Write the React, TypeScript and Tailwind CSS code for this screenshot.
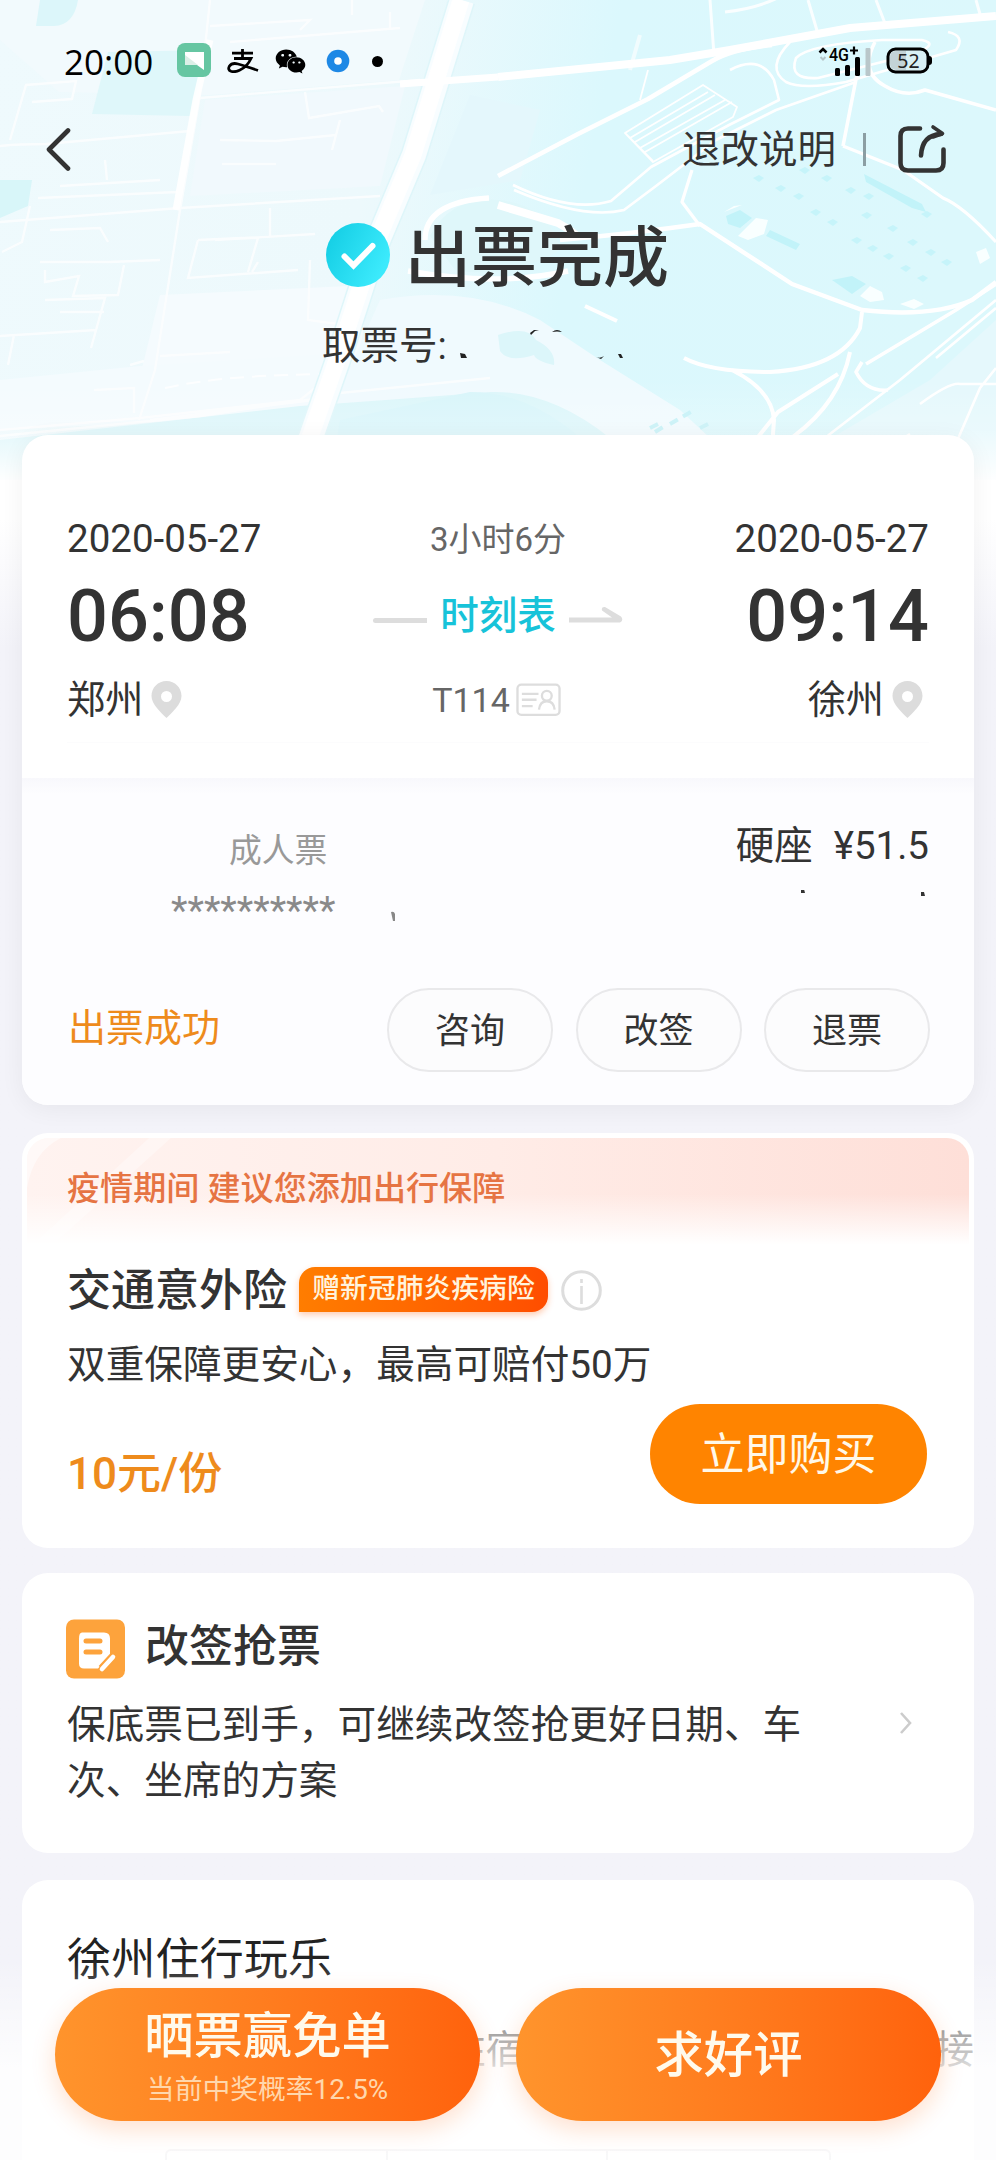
import type { ReactNode } from 'react';
import { FaWeixin } from 'react-icons/fa';

function MapBackdrop() {
  return (
    <svg className="absolute left-0 top-0" width="996" height="480" viewBox="0 0 996 480" fill="none">
      <defs>
        <linearGradient id="land" x1="0" y1="0" x2="1" y2="0.1">
          <stop offset="0" stopColor="#effafd" />
          <stop offset="0.4" stopColor="#edf9fc" />
          <stop offset="0.62" stopColor="#dbf8fd" />
          <stop offset="1" stopColor="#dcf8fc" />
        </linearGradient>
        <linearGradient id="fade" x1="0" y1="0" x2="0" y2="1">
          <stop offset="0" stopColor="#fff" stopOpacity="0" />
          <stop offset="0.5" stopColor="#fff" stopOpacity="0.2" />
          <stop offset="1" stopColor="#fff" stopOpacity="0.95" />
        </linearGradient>
      </defs>
      <rect width="996" height="480" fill="url(#land)" />
      {/* blocks */}
      <path d="M0 0h425l-26 80-190 15-150-3L0 40z" fill="#f2fafd" />
      <path d="M40 0h38q-4 25-24 26H36z" fill="#dcf6fa" />
      <path d="M108 52l100-2-18 66-98-2z" fill="#dff7fa" />
      <path d="M0 180h32l-4 26-28 12z" fill="#d8f6f9" />
      <path d="M205 100l200-14-25 100-190 10z" fill="#f1f9fd" />
      <path d="M470 95l70 15-20 70-90 15z" fill="#e4f7fc" />
      <path d="M160 295l210-10-12 80-220 20z" fill="#f5fbfe" />
      <path d="M0 380l140-14 190-12-10 60L0 430z" fill="#f4fbfe" />
      <path d="M380 300q90-16 160 20l60 40 80 50 75 70H300z" fill="#f0fafe" />
      <path d="M0 440l300-34q90-6 190-14 60-2 120 46l20 42H0z" fill="#dcf6fa" />
      <path d="M340 420l130-28q80 0 150 88H330z" fill="#d8f5fa" />
      <path d="M760 480L930 380l66-60v160z" fill="#e5f8fc" />
      <path d="M498 335q30-10 38 5 20 10 18 25-18-4-20-10-26 8-34-4z" fill="#dcf6fa" />
      <path d="M430 236q20-40 70-36 50 6 60 50-50 30-105 20z" fill="#dff7fa" />
      {/* minor streets */}
      <g stroke="#fcfeff" strokeWidth="2.4" opacity="0.9">
        <path d="M0 146q20-2 46-2L190 131M210 0l-10 95-20 115-25 160-16 50" />
        <path d="M200 98l220-18M0 222l180-14 200-12M10 140l16-55 50-4-4 18-40 3" />
        <path d="M210 26l100-6-10 10M230 42l170-14M390 12v18M352 0v15M305 92l4 26 70-12 4 6M340 120l-8 30M220 140l56 1 60-6M222 164l54 0" />
        <path d="M38 198l140-6M60 186l100-6M105 160l2 20M270 208v30M215 240l100-6" />
        <path d="M30 206l-8 36-20 10M50 230l50-2 8 14M40 262l70 0 50-2M45 270l0 12 34-6 -6 20 45-1 6-30M45 300l60-2 -14 50M60 312l44 0M0 336l96-6M14 335l-6 30" />
        <path d="M198 240l44-2 16 0-10 34M198 240l-10 38 110-8M258 262l-6 10M310 260l-2 60 30 4M160 356l70-4M94 390l40-2 0 25M130 365l14-4" />
        <path d="M0 430l140-12 160-18 30-24M0 436l200-20 120-18M150 420l180-22M330 394l160-16" />
      </g>
      <path d="M165 388q60-14 180-14" stroke="#fff" strokeWidth="2" strokeDasharray="14 8" opacity="0.8" />
      {/* avenues */}
      <path d="M210 40l-14 60-20 110" stroke="#fff" strokeWidth="7" opacity="0.9" />
      <path d="M462 0l-14 45-34 110-42 100-34 105-42 120" stroke="#dff6fa" strokeWidth="27" />
      <path d="M462 0l-14 45-34 110-42 100-34 105-42 120" stroke="#f8fdff" strokeWidth="24" />
      <path d="M461 0l-14 45-34 110-42 100-34 105-42 120" stroke="#fff" strokeWidth="17" />
      <path d="M400 84l98-7" stroke="#fff" strokeWidth="7" />
      <path d="M498 77l172-17 60-10 120-22 146-12" stroke="#fff" strokeWidth="8" />
      <path d="M640 35l-10 35" stroke="#fff" strokeWidth="4" opacity="0.6" />
      <path d="M710 0l4 55M808 0l10 34M876 0l10 26M976 0l4 14M725 12q36-4 60-18" stroke="#fff" strokeWidth="3" opacity="0.85" />
      {/* roads of the east side */}
      <g stroke="#fff" strokeWidth="3.2" strokeLinejoin="round">
        <path d="M498 176l80-42 70-35 64-38q20-12 60-16" strokeWidth="4.6" />
        <path d="M648 70l-8 30M625 133l78-48 34 22-4 10-80 45zM635 142l80-47M640 148l85-48M630 138l78-46M645 152l87-50M625 133l28 28" strokeWidth="1.8" />
        <path d="M730 70q30-16 44 10l5 20-50 25-78 42-40 34q-40 12-98-16" strokeWidth="2.600" />
        <path d="M856 82l-80 28-60 30-60 46-32 24q-40 10-110-20" strokeWidth="2.600" />
        <path d="M790 42q-25 26-4 40 16 8 60 0l110-32q10-14-8-18M796 58q-8 22 22 20l96-24q26-10 8-14h-40q-72 4-86 18z" strokeWidth="2.600" />
        <path d="M875 42q-16 30 10 44 20 12 40 4l71 20M857 74l-14 72" strokeWidth="3.600" />
        <path d="M692 170l-10 32 18 24M843 146l60 24 40 28q20 8 53 44" />
        <path d="M498 205l60 18q10 5 18 12" strokeWidth="8" />
        <path d="M560 240q70-6 140-16l92 60 70 26q70 8 110-10l24-18" strokeWidth="4.4" />
        <path d="M425 240q0-38 64-42M408 271q90 16 160 0" strokeWidth="5.400" />
        <path d="M585 306l32 15M862 312l-2 16q-20 40-90 44-60 0-86-14M850 352q-10 50-56 84l-40 40M732 370q40 20 42 50l-4 56M838 374l-60 38-40 50" strokeWidth="4" />
        <path d="M862 362l-6 10q10 20 32 18M996 284l-40 26-90 54" strokeWidth="3.600" />
        <path d="M996 300L900 380 830 434l-50 42M996 308l-60 50" strokeWidth="2.600" />
        <path d="M880 466l10-20 20-12M996 368l-16 20-26 60-8 18M920 404q30-22 40-20h36" strokeWidth="2.600" />
      </g>
      {/* park plots */}
      <g fill="#c2f3f9">
        <path d="M726 216l14-6 12 8-12 10-12-4zM832 280l20-4 14 8-14 10zM770 230l30 14-4 6-30-14zM864 174l58 30 4 8-14-4-46-26z" />
        {[[758, 178], [780, 188], [798, 196], [815, 212], [832, 222], [856, 240], [872, 248], [888, 256], [905, 268], [922, 278], [866, 215], [892, 228], [912, 242], [930, 252], [946, 262], [804, 170], [826, 178], [850, 190], [868, 196], [926, 214]].map(([x, y]) => (
          <path key={`${x}-${y}`} d={`M${x - 5} ${y}l6-3 5 3-5 4z`} opacity="0.85" />
        ))}
      </g>
      <g fill="#f9ffff">
        <path d="M738 236l18-18 12 2-4 14-16 6zM860 296l10-10 12 6 2 8-14 2zM900 304l14-5 10 5-10 5zM724 212l10-6 8-1zM976 252l10-4 4 10-10 6z" />
      </g>
      <path d="M650 428l8-4M670 424l24-14M700 428l12-6M655 432l8-5" stroke="#c4f1f7" strokeWidth="4" strokeDasharray="9 6" />
      <rect y="380" width="996" height="100" fill="url(#fade)" />
    </svg>
  );
}

function StatusBar() {
  return (
    <div className="flex h-[62px] items-center pl-[64px] pt-[60px] text-black">
      <span className="w-[113px] font-['Open_Sans','Noto_Sans'] text-[35px] leading-none">20:00</span>
      <svg width="34" height="34" viewBox="0 0 34 34" className="-translate-y-px">
        <rect width="34" height="34" rx="8" fill="#66c6a2" />
        <path d="M8 9h19v18l-7-5H8z" fill="#fff" />
        <path d="M8 12l13 10H8z" fill="#dcefe7" />
      </svg>
      <svg className="ml-[16px]" width="32" height="24" viewBox="0 0 32 24" fill="none" stroke="#000" strokeWidth="2.800">
        <path d="M15.500 0v9M5 4.200h21M7 9.500h17q-4 8.500-11.500 11.800-5 2.200-8.500 1-3.500-1.700-1.700-5 2.700-4 8.700-2.300Q18 17 31 21.500" />
      </svg>
      <FaWeixin className="ml-[16px] h-[31px] w-[31px]" />
      <svg className="ml-[20px]" width="24" height="24" viewBox="0 0 24 24">
        <circle cx="12" cy="12" r="11.300" fill="#1e88e5" />
        <circle cx="12" cy="12" r="3.800" fill="#fff" />
      </svg>
      <span className="ml-[22px] h-[11px] w-[11px] rounded-full bg-black" />
      <svg className="ml-[434px]" width="56" height="32" viewBox="0 0 56 32">
        <path d="M2.500 7.500l3.500-3.500 3.500 3.500" stroke="#000" strokeWidth="2.600" fill="none" />
        <path d="M3.500 12l2.500 2.500 2.500-2.500" stroke="#b5c5c8" strokeWidth="2" fill="none" />
        <text x="12" y="15.500" fontFamily="Roboto" fontWeight="500" fontSize="18" textLength="20" lengthAdjust="spacingAndGlyphs">4G</text>
        <path d="M33 5.500h8M37 1.500v8" stroke="#000" strokeWidth="2.200" />
        <rect x="18" y="23" width="5" height="8" rx="1.500" />
        <rect x="28" y="20" width="5" height="11" rx="1.500" />
        <rect x="38" y="12" width="5" height="19" rx="1.500" />
        <rect x="48.500" y="3" width="5" height="28" rx="1" fill="#b9c7ca" />
      </svg>
      <svg className="ml-[13px]" width="46" height="28" viewBox="0 0 46 28">
        <rect x="2" y="2" width="40" height="23" rx="7.500" fill="#d9f0f4" stroke="#000" strokeWidth="3" />
        <path d="M10 4h10v19H10q-6-1-6-6v-7q0-6 6-6z" fill="#c3d3d7" />
        <path d="M43 9q3 0 3 3v3q0 3-3 3z" fill="#000" />
        <text x="22.500" y="20.500" textAnchor="middle" fontFamily="Noto Sans" fontSize="19.500" fill="#222">52</text>
      </svg>
    </div>
  );
}

function Header() {
  return (
    <header className="relative h-[435px] text-[#333]">
      <StatusBar />
      <div className="mt-[51px] flex h-[72px] items-center pl-[45px]">
        <svg width="28" height="44" viewBox="0 0 28 44" fill="none" stroke="#333" strokeWidth="4.600" strokeLinecap="round" strokeLinejoin="round">
          <path d="M23 3.500L4 22.500l19 19" />
        </svg>
        <span className="ml-[609px] pt-[2px] text-[38.500px] leading-none">退改说明</span>
        <span className="ml-[27px] h-[33px] w-[3px] bg-[#8b9ea3]" />
        <svg className="ml-[31px]" width="50" height="50" viewBox="0 0 50 50" fill="none" stroke="#333" strokeWidth="4.600" strokeLinecap="round" strokeLinejoin="round">
          <path d="M23 4.500H11q-7.500 0-7.500 7.500v27q0 7.500 7.500 7.500h28q7.500 0 7.500-7.500V25.500" />
          <path d="M24 31.500Q25 11 44 10" />
          <path d="M36 3l9.500 6.500L36 13" strokeWidth="3.600" />
        </svg>
      </div>
      <div className="mt-[34px] flex h-[72px] items-center pl-[325px]">
        <svg width="66" height="66" viewBox="0 0 66 66">
          <defs>
            <linearGradient id="ok" x1="0" y1="0" x2="1" y2="0.5">
              <stop offset="0" stopColor="#10cbe2" />
              <stop offset="1" stopColor="#3ceafc" />
            </linearGradient>
          </defs>
          <circle cx="33" cy="33" r="32" fill="url(#ok)" />
          <path d="M19.500 34.500l9 9L47.500 24" fill="none" stroke="#fff" strokeWidth="6" strokeLinecap="round" />
        </svg>
        <h1 className="ml-[14px] pt-[8px] text-[66px] font-medium leading-none">出票完成</h1>
      </div>
      <div className="mt-[18px] flex h-[72px] items-center pl-[322px]">
        <span className="pt-[2px] text-[38.500px] leading-none">取票号:</span>
        <svg className="ml-[11px]" width="170" height="44" viewBox="0 0 170 44" fill="#222">
          <path d="M2 30l5 1 2 4H3zM72 10l4-3h5l-4 1-4 4zM94 9q5-4 10 0-5-1-10 0zM138 34q4 2 8-1l-3 3zM160 31l3 0 2 4h-3z" />
        </svg>
      </div>
    </header>
  );
}

function Pin() {
  return (
    <svg width="31" height="37" viewBox="0 0 31 37">
      <path fillRule="evenodd" fill="#dcdcdc" d="M15.500 0C7 0 .5 6.700.5 15c0 8 9 16 15 22 6-6 15-14 15-22C30.500 6.700 24 0 15.500 0zm0 10a5.500 5.500 0 110 11 5.500 5.500 0 010-11z" />
    </svg>
  );
}

function Pill({ children }: { children: ReactNode }) {
  return (
    <button className="h-[84px] w-[166px] shrink-0 rounded-full border-2 border-[#e9e9eb] bg-[#fcfcfd] pt-[2px] text-[35px] leading-none">{children}</button>
  );
}

function TicketCard() {
  return (
    <section className="h-[670px] overflow-hidden rounded-[26px] bg-white text-[#333] shadow-[0_4px_24px_rgba(0,0,0,0.055)]">
      <div className="h-[343px] px-[45px] pt-[80px]">
        <div className="flex h-[48px] items-center justify-between text-[38.500px] leading-none">
          <span>2020-05-27</span>
          <span className="text-[33px] text-[#666]">3小时6分</span>
          <span>2020-05-27</span>
        </div>
        <div className="flex h-[104px] items-center justify-between leading-none">
          <span className="w-[186px] pt-[4px] text-[72px] font-medium">06:08</span>
          <span className="flex items-center">
            <span className="mt-[10px] h-[5px] w-[54px] rounded-l-full bg-[#ddd]" />
            <span className="mx-[13px] pt-[3px] text-[38.500px] font-medium text-[#17c3d9]">时刻表</span>
            <svg className="-mt-[2px]" width="54" height="18" viewBox="0 0 54 18">
              <path d="M0 12.500h43L33 5.500q-1-4 3-3.500l16 9.500q3 4-1 6H0z" fill="#ddd" />
            </svg>
          </span>
          <span className="w-[186px] pt-[4px] text-right text-[72px] font-medium">09:14</span>
        </div>
        <div className="flex h-[66px] items-center justify-between text-[38.200px] leading-none">
          <span className="flex w-[200px] items-center gap-[8px]">郑州<Pin /></span>
          <span className="flex items-center gap-[6px] pr-[3px] text-[34px] text-[#666]">
            T114
            <svg width="45" height="33.500" viewBox="0 0 46 34" fill="none" stroke="#ddd" strokeWidth="2.400">
              <rect x="1.500" y="1.500" width="43" height="31" rx="4" />
              <path d="M6 11h17M6 17h15M6 23.500h11" />
              <circle cx="31.500" cy="13" r="5" />
              <path d="M23.500 27q1-8.500 8-8.500t8 8.500" />
            </svg>
          </span>
          <span className="flex w-[200px] items-center justify-end gap-[8px] pr-[6px]">徐州<Pin /></span>
        </div>
        <div className="mt-[9px] h-px bg-[#fcfcfd]" />
      </div>
      <div className="h-[327px] bg-linear-to-b from-[#f8f8fc] to-[#fdfdff] to-5% px-[45px] pt-[44px]">
        <div className="flex h-[48px] items-center justify-between leading-none">
          <span className="ml-[162px] mt-[11px] text-[32.800px] text-[#999]">成人票</span>
          <span className="flex gap-[21px] pt-px text-[38.500px]"><span>硬座</span><span>¥51.5</span></span>
        </div>
        <div className="ml-[104px] mt-[20px] flex h-[48px]">
          <span className="w-[165px] shrink-0 text-[38.200px] leading-[42px] text-[#8a8a8a]">**********</span>
          <svg className="ml-[54px] shrink-0" width="539" height="40" viewBox="0 0 539 40">
            <path d="M1 22q3-1 4 2v7H3z" fill="#888" />
            <path d="M411 0l3-1 1 4h-4zM531 2h3l1 4h-4z" fill="#333" />
          </svg>
        </div>
        <div className="mt-[50px] flex h-[84px] items-center">
          <span className="w-[320px] shrink-0 pb-[4px] pl-px text-[38px] leading-none text-[#ee8b1c]">出票成功</span>
          <div className="flex gap-[22.500px]">
            <Pill>咨询</Pill>
            <Pill>改签</Pill>
            <Pill>退票</Pill>
          </div>
        </div>
      </div>
    </section>
  );
}

function InsuranceCard() {
  return (
    <section className="mt-[28px] h-[415px] rounded-[26px] bg-white px-[5px] pt-[5px] text-[#333]">
      <div className="relative h-[112px] overflow-hidden rounded-t-[22px] bg-linear-to-r from-[#fff3f0] via-[#ffece7] to-[#fedfd8]">
        <div className="absolute inset-0 bg-linear-to-b from-transparent from-50% to-white to-95%" />
        <svg className="absolute left-0 top-0" width="160" height="112" viewBox="0 0 160 112">
          <path d="M122 0h22L20 112H0z" fill="#fff" opacity="0.35" />
          <path d="M0 0h34Q6 14 0 50z" fill="#fff" opacity="0.5" />
        </svg>
        <p className="relative ml-[40px] flex h-[101px] items-center text-[33.100px] font-medium leading-none text-[#e67443]">疫情期间 建议您添加出行保障</p>
      </div>
      <div className="px-[40px] leading-none">
        <div className="mt-[11px] flex h-[56px] items-center">
          <h2 className="pt-[4px] text-[44px] font-medium">交通意外险</h2>
          <span className="ml-[12px] flex h-[45px] w-[249px] items-center justify-center rounded-[16px] rounded-bl-none bg-linear-to-r from-[#ff7d00] to-[#ff4d00] pb-px text-[27.800px] font-medium text-[#fff3dd] shadow-[0_3px_6px_rgba(255,90,0,0.3)]">赠新冠肺炎疾病险</span>
          <svg className="ml-[13px] mt-[2px]" width="41" height="41" viewBox="0 0 41 41" fill="none" stroke="#ddd">
            <circle cx="20.500" cy="20.500" r="18.800" strokeWidth="3" />
            <path d="M20.500 16v18M20.500 9v4" strokeWidth="2.600" />
          </svg>
        </div>
        <p className="mt-[26px] flex h-[44px] items-center text-[38.650px]">双重保障更安心，最高可赔付50万</p>
        <div className="mt-[17px] flex justify-between pr-[2px]">
          <span className="mt-[48px] text-[44px] font-medium text-[#ee8b1c]">10元/份</span>
          <button className="h-[100px] w-[277px] rounded-full bg-[#ff8400] pt-px text-[44px] leading-none text-[#fff8e8]">立即购买</button>
        </div>
      </div>
    </section>
  );
}

function RebookCard() {
  return (
    <section className="mt-[25px] h-[280px] rounded-[26px] bg-white px-[44px] pt-[46px] text-[#333]">
      <div className="flex h-[60px] items-center">
        <svg width="59" height="60" viewBox="0 0 59 60">
          <rect y="0.500" width="59" height="59" rx="8" fill="#fda33c" />
          <path d="M16 13.500h22q6 0 6 6v17L32 49.500H18q-5 0-5-5v-25q0-6 3-6z" fill="#fff" />
          <path d="M20 22h14M20 33h14" stroke="#fda33c" strokeWidth="5" strokeLinecap="round" />
          <path d="M36 50l11.500-12.500" stroke="#fda33c" strokeWidth="9" />
          <path d="M36 50l11-12" stroke="#fff" strokeWidth="4.600" strokeLinecap="round" />
        </svg>
        <h2 className="ml-[20px] pb-[4px] text-[44px] font-medium leading-none">改签抢票</h2>
      </div>
      <div className="mt-[18px] flex items-start justify-between pl-px">
        <p className="w-[740px] text-[38.650px] leading-[55.500px]">保底票已到手，可继续改签抢更好日期、车次、坐席的方案</p>
        <svg className="mr-[16px] mt-[14px]" width="16" height="24" viewBox="0 0 16 24" fill="none" stroke="#ccc" strokeWidth="2.600">
          <path d="M3 2l9 10-9 10" />
        </svg>
      </div>
    </section>
  );
}

function ActionBar() {
  return (
    <div className="absolute inset-x-0 bottom-0 flex h-[200px] gap-[36px] bg-linear-to-b from-white/0 to-white/85 to-55% pl-[55px] pt-[28px] leading-none text-[#fffaec]">
      <button className="flex h-[133px] w-[425px] flex-col items-center rounded-full bg-linear-to-r from-[#ff942c] to-[#ff620c] pt-[24px] shadow-[0_8px_24px_rgba(255,98,12,0.2)]">
        <span className="text-[49.300px] font-medium leading-none">晒票赢免单</span>
        <span className="mt-[15px] text-[27.800px] leading-none text-[#ffd7ac]">当前中奖概率12.5%</span>
      </button>
      <button className="h-[133px] w-[425px] rounded-full bg-linear-to-r from-[#ff942c] to-[#ff620c] pt-[3px] text-[49.300px] font-medium leading-none shadow-[0_8px_24px_rgba(255,98,12,0.2)]">求好评</button>
    </div>
  );
}

function CityCard() {
  return (
    <section className="mt-[27px] h-[280px] overflow-hidden rounded-t-[26px] bg-white px-[45px] pt-[58px] leading-none">
      <h2 className="text-[44.200px] text-[#222]">徐州住行玩乐</h2>
      <div className="-mr-[45px] mt-[48px] flex h-[40px] items-center justify-between text-[38.500px] text-[#333]">
        <span className="ml-[380px]">住宿</span>
        <span>接</span>
      </div>
      <div className="ml-[98px] mt-[79px] grid h-[20px] w-[666px] grid-cols-3 divide-x-2 divide-[#cfcfd4] rounded-t-[6px] border-2 border-b-0 border-[#cfcfd4]">
        <span /><span /><span />
      </div>
    </section>
  );
}

export default function App() {
  return (
    <div className="relative h-[2160px] w-[996px] overflow-hidden bg-linear-to-b from-white from-24% to-[#f3f3f9] to-30% font-['Roboto','Noto_Sans_CJK_SC',sans-serif]">
      <MapBackdrop />
      <Header />
      <main className="relative px-[22px]">
        <TicketCard />
        <InsuranceCard />
        <RebookCard />
        <CityCard />
      </main>
      <ActionBar />
    </div>
  );
}
